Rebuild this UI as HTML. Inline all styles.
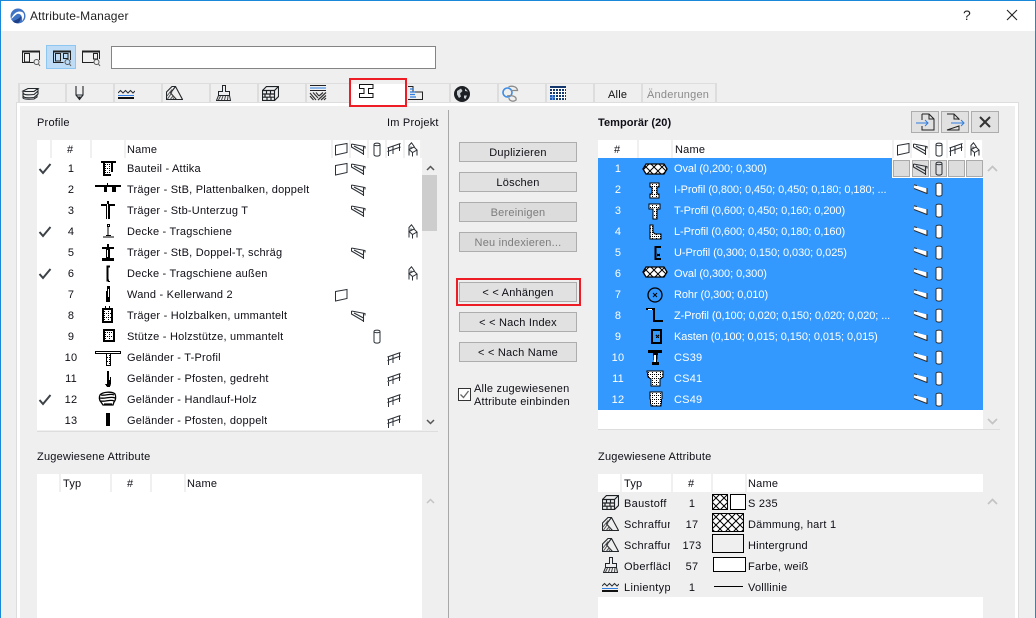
<!DOCTYPE html>
<html lang="de"><head><meta charset="utf-8"><title>Attribute-Manager</title>
<style>
html,body{margin:0;padding:0}
body{width:1036px;height:618px;overflow:hidden;position:relative;background:#efefef;font:11px/14px "Liberation Sans",sans-serif;color:#0e0e16;letter-spacing:.22px}
div,span,svg{position:absolute;box-sizing:border-box}
svg{overflow:visible}
.t{white-space:nowrap;margin-top:1px}
.btn{left:459px;width:118px;height:20px;background:#e1e1e1;border:1px solid #adadad;text-align:center;line-height:20px}
.dis{color:#7c7c7c;background:#dcdcdc}
.r{height:21px;line-height:23px;white-space:nowrap}
.n{width:30px;text-align:center}
.w{color:#fff}
.p{letter-spacing:-.07px}
.c{width:46px;overflow:hidden;letter-spacing:.32px}
.v{width:2px;background:#f0f0f0;top:0;height:18px}
.tab{top:83px;height:20px;border-top:1px solid #ddd;border-left:2px solid #ddd}
.cell{top:160px;width:17px;height:17px;background:#ddd;border:1px solid #aaa}
</style></head>
<body>
<svg width="0" height="0" style="left:0;top:0"><defs>
<pattern id="d" width="4" height="4" patternUnits="userSpaceOnUse"><rect width="4" height="4" fill="#fff"/><path d="M0 0h1v1H0zM2 2h1v1H2zM2 0h1v1H2z" fill="#000"/></pattern>
<pattern id="x" width="8" height="8" patternUnits="userSpaceOnUse"><rect width="8" height="8" fill="#fff"/><path d="M0 0L8 8M8 0L0 8" stroke="#000" stroke-width="1"/></pattern>
<symbol id="wall" viewBox="0 0 14 14"><path d="M1.500 3.500L13 1.500V10.500L1.500 13Z" fill="none" stroke="#2b3036" stroke-width="1"/></symbol>
<symbol id="beam" viewBox="0 0 15 14"><path d="M.5 2L14 4.500V6.500M.5 2V5L12.500 12V13M12.500 4.300V13M3 4L12.500 9" fill="none" stroke="#2b3036" stroke-width="1.050"/></symbol>
<symbol id="beamw" viewBox="0 0 15 14"><path d="M1 4L14 7.500V12.500L1 7.500Z" fill="#fff"/><path d="M1 7.500L14 12.500M14 7V13M1 3.800L4 4.500" fill="none" stroke="#2b3036" stroke-width="1.100"/></symbol>
<symbol id="col" viewBox="0 0 8 15"><path d="M1 2.500C1 .6 7 .6 7 2.500V12.500C7 14.600 1 14.600 1 12.500ZM1 3C2.500 4 5.500 4 7 3" fill="none" stroke="#2b3036" stroke-width="1"/></symbol>
<symbol id="colw" viewBox="0 0 8 15"><path d="M1 2.500C1 .6 7 .6 7 2.500V12.500C7 14.600 1 14.600 1 12.500Z" fill="#fff" stroke="#2b3036" stroke-width="1"/></symbol>
<symbol id="rail" viewBox="0 0 14 14"><path d="M.5 6L13.500 1.500M.5 9.500L13.500 5M1.500 14V5.500M6 12V4M12.500 9V2" fill="none" stroke="#2b3036" stroke-width="1"/></symbol>
<symbol id="chair" viewBox="0 0 10 15"><path d="M1 7.500V3.500L3.500 .8L5.500 3.500L6.500 5M1 7.500L6 5L9 8L4.500 10.500ZM1 7.500V13.500M4.500 10.500V14.500M9 8V13.500M3 4.500V6.500" fill="none" stroke="#2b3036" stroke-width="1"/></symbol>
<symbol id="brick" viewBox="0 0 17 15"><path d="M.5 4.500H12.500V14.500H.5ZM.5 4.500L4.500 .5H16.500V10.500L12.500 14.500M12.500 4.500L16.500 .5M.5 8H12.500M.5 11.200H12.500M4.500 4.500V8M8.500 4.500V8M3 8V11.200M8 8V11.200M5 11.200V14.500M9 11.200V14.500" fill="none" stroke="#1d2226" stroke-width="1.150"/></symbol>
<symbol id="hat" viewBox="0 0 17 14"><path d="M.5 6L6 .5H9.500L16.500 13.500H.5Z" fill="none" stroke="#22272b" stroke-width="1.100"/><path d="M9.500 .5L4.500 7L10.500 13.500" fill="none" stroke="#22272b" stroke-width="1.100"/><path d="M1 10L6 3.500M1.500 13L6 6.500M4.500 13L7.500 9.500M7 13L8.500 11" stroke="#555" stroke-width="1"/></symbol>
<symbol id="brush" viewBox="0 0 17 17"><path d="M6.500 .5H9.500V6.500H13.500V10.500L14.500 15.500H.5L2.500 10.500V6.500H6.500ZM2.500 10.500H13.500" fill="none" stroke="#22272b" stroke-width="1"/><path d="M2.500 15L4.500 11M5.500 15L7 11M8.500 15L9.500 11M11.500 15L12 11" stroke="#444" stroke-width="1"/></symbol>
<symbol id="lines" viewBox="0 0 17 10"><path d="M0 4L2.500 1.500L5 4L7.500 1.500L10 4L12.500 1.500L15 4L17 2" fill="none" stroke="#2b3036" stroke-width="1"/><path d="M0 6.500H16" stroke="#2f7de0" stroke-width="1"/><path d="M0 9H16" stroke="#111" stroke-width="2"/></symbol>
</defs></svg>

<!-- window frame and title -->
<div style="left:0;top:0;width:1036px;height:31px;background:#fff;border-top:1px solid #1a88d8"></div>
<div style="left:0;top:0;width:1px;height:618px;background:#1a88d8"></div>
<div style="right:0;top:0;width:1px;height:618px;background:#1a88d8"></div>
<svg style="left:10px;top:8px" width="16" height="16" viewBox="0 0 16 16"><circle cx="8" cy="8" r="7.500" fill="#3f73c4"/><path d="M1 11C4 4 9 2 13 4.500C15 7 14 11 12 13C13 8 10 5 7 6C5 7 3 10 1 11Z" fill="#fff"/><path d="M3 13C6 12 9 11 11 8C11 11 10 14 8 15C6 15.500 4 15 3 13Z" fill="#1d3f87"/></svg>
<div class="t" style="left:30px;top:7px;font-size:12px;line-height:16px;color:#222;letter-spacing:.15px">Attribute-Manager</div>
<div class="t" style="left:963px;top:6px;font-size:14px;line-height:16px;color:#222;letter-spacing:0">?</div>
<svg style="left:1006px;top:9px" width="12" height="12" viewBox="0 0 12 12"><path d="M1 1L11 11M11 1L1 11" stroke="#222" stroke-width="1.100"/></svg>

<!-- toolbar -->
<svg style="left:22px;top:50px" width="18" height="17" viewBox="0 0 18 17"><path d="M0 1.500H18" stroke="#222" stroke-width="2"/><path d="M.5 1V12.500H11.500M17.500 1V10M2.500 3.500H7.500V12H2.500Z" fill="none" stroke="#222" stroke-width="1"/><circle cx="14.500" cy="12" r="2.500" fill="#efefef" stroke="#555"/><path d="M16.500 14L18 16" stroke="#555"/></svg>
<div style="left:46px;top:45px;width:30px;height:24px;background:#bedcf6;border:1px solid #8ec6f2"></div>
<svg style="left:53px;top:50px" width="18" height="17" viewBox="0 0 18 17"><path d="M0 1.500H18" stroke="#222" stroke-width="2"/><path d="M.5 1V12.500H10.500M17.500 1V10M2.500 3.500H7.500V11H2.500ZM10.500 3.500H15V8.500H10.500Z" fill="none" stroke="#222" stroke-width="1"/><circle cx="14.500" cy="12" r="2.500" fill="#bedcf6" stroke="#555"/><path d="M16.500 14L18 16" stroke="#555"/></svg>
<svg style="left:82px;top:50px" width="18" height="17" viewBox="0 0 18 17"><path d="M0 1.500H18" stroke="#222" stroke-width="2"/><path d="M.5 1V12.500H11.500M17.500 1V9M11.500 3.500H15.500V9H11.500Z" fill="none" stroke="#222" stroke-width="1"/><circle cx="14.500" cy="12" r="2.500" fill="#efefef" stroke="#555"/><path d="M16.500 14L18 16" stroke="#555"/></svg>
<div style="left:111px;top:46px;width:325px;height:23px;background:#fff;border:1px solid #848484"></div>

<!-- tabs -->
<div class="tab" style="left:18px;width:47px"></div>
<div class="tab" style="left:65px;width:48px"></div>
<div class="tab" style="left:113px;width:48px"></div>
<div class="tab" style="left:161px;width:48px"></div>
<div class="tab" style="left:209px;width:48px"></div>
<div class="tab" style="left:257px;width:48px"></div>
<div class="tab" style="left:305px;width:46px"></div>
<div class="tab" style="left:405px;width:44px"></div>
<div class="tab" style="left:449px;width:48px"></div>
<div class="tab" style="left:497px;width:48px"></div>
<div class="tab" style="left:545px;width:48px"></div>
<div class="tab" style="left:593px;width:48px"></div>
<div class="tab" style="left:641px;width:76px;border-right:2px solid #ddd"></div>

<!-- panel -->
<div style="left:17px;top:103px;width:1001px;height:515px;background:#efefef;border:3px solid #fff;border-bottom:0;outline:1px solid #ddd;outline-offset:0"></div>
<div style="left:351px;top:84px;width:54px;height:23px;background:#fff"></div>
<div style="left:349px;top:78px;width:58px;height:29px;border:2px solid #ee1c25"></div>

<svg style="left:22px;top:87px" width="17" height="13" viewBox="0 0 17 13"><path d="M1 4L6 1.500H16L12 4.500H3ZM1 4V6C2 8 5 8 12 7.500L16 4V2M1 6.500V9C2 11 5 11 12 10.500L16 7V4.500M1 9.500V11C2 12.500 6 12.500 12 12L15 10V7.500" fill="none" stroke="#22272b" stroke-width="1.100"/></svg>
<svg style="left:75px;top:86px" width="9" height="15" viewBox="0 0 9 15"><path d="M1 0V9L4.500 13.500L8 9V0M1 9H8" fill="none" stroke="#22272b" stroke-width="1.100"/><path d="M3 10.500H6L4.500 13Z" fill="#222"/></svg>
<svg style="left:118px;top:89px" width="17" height="10"><use href="#lines"/></svg>
<svg style="left:166px;top:86px" width="17" height="14"><use href="#hat"/></svg>
<svg style="left:216px;top:85px" width="17" height="17"><use href="#brush"/></svg>
<svg style="left:262px;top:86px" width="17" height="15"><use href="#brick"/></svg>
<svg style="left:310px;top:85px" width="16" height="16" viewBox="0 0 16 16"><path d="M0 .5H16" stroke="#222"/><path d="M0 3H16" stroke="#2f7de0"/><path d="M0 5.500H16" stroke="#222"/><path d="M0 8L6 15M0 11L3.500 15M3 7.500L8 13M6 7.500L9 11M8 15L16 7.500M11 15L16 10.500M9 11L13 7.500M14 15L16 13" fill="none" stroke="#333" stroke-width="1.200"/></svg>
<svg style="left:359px;top:84px" width="15" height="15" viewBox="0 0 15 15"><path d="M.5 .5H14V4.500H9.500V9.500H14V13.500H.5V9.500H5V4.500H.5Z" fill="#fff" stroke="#111" stroke-width="1"/></svg>
<svg style="left:407px;top:86px" width="16" height="14" viewBox="0 0 16 14"><path d="M1 .5H6V6H15.500V13.500H1" fill="none" stroke="#222"/><path d="M3 3H6M3 6H8M3 8.500H8M3 11H9" stroke="#2f7de0" stroke-width="1.200"/></svg>
<svg style="left:454px;top:86px" width="16" height="16" viewBox="0 0 16 16"><circle cx="8" cy="8" r="8" fill="#1c2024"/><path d="M3 5L7 2.500L8.500 5L6 7.500L7 10.500L5 12L3 8.500ZM10 9.500H13L11.500 13L10 12ZM11 2.500L14 5.500L11 5Z" fill="#c8cdd1"/></svg>
<svg style="left:502px;top:85px" width="16" height="17" viewBox="0 0 16 17"><circle cx="5.500" cy="7.500" r="4.500" fill="none" stroke="#3d8ce6" stroke-width="1.600"/><path d="M6.500 2C9 .5 15 1 15.500 5.500H9M5 11C9 10 15 11 14 15C11 17.500 7 15.500 7 13" fill="none" stroke="#8c8c8c" stroke-width="1.300"/></svg>
<svg style="left:550px;top:86px" width="16" height="14" viewBox="0 0 16 14"><rect width="16" height="14" fill="#14386e"/><path d="M0 2.500H16M0 5.500H16M0 8.500H16M0 11.500H16M2.500 2V14M5.500 2V14M8.500 2V14M11.500 2V14M14.500 2V14" stroke="#fff" stroke-width="1"/><rect y="9" width="5" height="5" fill="#1f6ad6" opacity=".7"/></svg>
<div class="t" style="left:608px;top:87px;color:#111">Alle</div>
<div class="t" style="left:647px;top:87px;color:#8a8a8a">Änderungen</div>

<!-- divider -->
<div style="left:448px;top:110px;width:1px;height:508px;background:#a8a8a8"></div>

<!-- left top list -->
<div class="t" style="left:37px;top:115px">Profile</div>
<div class="t" style="left:387px;top:115px">Im Projekt</div>
<div style="left:37px;top:140px;width:385px;height:290px;background:#fff"></div>
<div class="v" style="left:50px;top:140px"></div><div class="v" style="left:90px;top:140px"></div><div class="v" style="left:124px;top:140px"></div><div class="v" style="left:331px;top:140px"></div><div class="v" style="left:349px;top:140px"></div><div class="v" style="left:367px;top:140px"></div><div class="v" style="left:385px;top:140px"></div><div class="v" style="left:403px;top:140px"></div><div class="v" style="left:420px;top:140px"></div>
<div class="t" style="left:67px;top:142px">#</div>
<div class="t" style="left:127px;top:142px">Name</div>
<svg style="left:334px;top:142px" width="14" height="14"><use href="#wall"/></svg>
<svg style="left:351px;top:142px" width="15" height="14"><use href="#beam"/></svg>
<svg style="left:373px;top:142px" width="8" height="15"><use href="#col"/></svg>
<svg style="left:387px;top:142px" width="14" height="14"><use href="#rail"/></svg>
<svg style="left:408px;top:142px" width="10" height="15"><use href="#chair"/></svg>

<div class="r n" style="left:56px;top:158px">1</div><div class="r" style="left:127px;top:158px">Bauteil - Attika</div>
<div class="r n" style="left:56px;top:179px">2</div><div class="r" style="left:127px;top:179px">Träger - StB, Plattenbalken, doppelt</div>
<div class="r n" style="left:56px;top:200px">3</div><div class="r" style="left:127px;top:200px">Träger - Stb-Unterzug T</div>
<div class="r n" style="left:56px;top:221px">4</div><div class="r" style="left:127px;top:221px">Decke - Tragschiene</div>
<div class="r n" style="left:56px;top:242px">5</div><div class="r" style="left:127px;top:242px">Träger - StB, Doppel-T, schräg</div>
<div class="r n" style="left:56px;top:263px">6</div><div class="r" style="left:127px;top:263px">Decke - Tragschiene außen</div>
<div class="r n" style="left:56px;top:284px">7</div><div class="r" style="left:127px;top:284px">Wand - Kellerwand 2</div>
<div class="r n" style="left:56px;top:305px">8</div><div class="r" style="left:127px;top:305px">Träger - Holzbalken, ummantelt</div>
<div class="r n" style="left:56px;top:326px">9</div><div class="r" style="left:127px;top:326px">Stütze - Holzstütze, ummantelt</div>
<div class="r n" style="left:56px;top:347px">10</div><div class="r" style="left:127px;top:347px">Geländer - T-Profil</div>
<div class="r n" style="left:56px;top:368px">11</div><div class="r" style="left:127px;top:368px">Geländer - Pfosten, gedreht</div>
<div class="r n" style="left:56px;top:389px">12</div><div class="r" style="left:127px;top:389px">Geländer - Handlauf-Holz</div>
<div class="r n" style="left:56px;top:410px;height:19px;overflow:hidden">13</div><div class="r" style="left:127px;top:410px;height:19px;overflow:hidden">Geländer - Pfosten, doppelt</div>

<!-- check marks -->
<svg style="left:38px;top:163px" width="14" height="12" viewBox="0 0 14 12"><path d="M1.500 6L5 10L12.500 1" fill="none" stroke="#3c4247" stroke-width="2"/></svg>
<svg style="left:38px;top:226px" width="14" height="12" viewBox="0 0 14 12"><path d="M1.500 6L5 10L12.500 1" fill="none" stroke="#3c4247" stroke-width="2"/></svg>
<svg style="left:38px;top:268px" width="14" height="12" viewBox="0 0 14 12"><path d="M1.500 6L5 10L12.500 1" fill="none" stroke="#3c4247" stroke-width="2"/></svg>
<svg style="left:38px;top:394px" width="14" height="12" viewBox="0 0 14 12"><path d="M1.500 6L5 10L12.500 1" fill="none" stroke="#3c4247" stroke-width="2"/></svg>

<!-- left profile icons -->
<svg style="left:95px;top:160px" width="26" height="17" viewBox="0 0 26 17" shape-rendering="crispEdges"><path d="M6 1H21V3H18V12H16V16H8V3H6Z" fill="#000"/><path d="M10 3H16V14H10Z" fill="url(#d)"/></svg>
<svg style="left:95px;top:183px" width="26" height="12" viewBox="0 0 26 12" shape-rendering="crispEdges"><path d="M0 2H26V4H21V9H17V4H12V9H9V4H0Z" fill="#000"/><path d="M12 0h1v2h-1z" fill="#000"/></svg>
<svg style="left:95px;top:201px" width="26" height="19" viewBox="0 0 26 19" shape-rendering="crispEdges"><path d="M6 3H20V5H15V18H11V5H6Z" fill="#000"/><path d="M12 1h1v17h-1z" fill="#fff"/><path d="M12 0h2v3h-2z" fill="#000"/></svg>
<svg style="left:95px;top:223px" width="26" height="18" viewBox="0 0 26 18" shape-rendering="crispEdges"><path d="M12.500 1.500H14.500V3.500H12.500ZM13 3V13M8 14H19" stroke="#000" fill="none"/><path d="M11 12h5v1h-5z" fill="#000"/></svg>
<svg style="left:95px;top:243px" width="26" height="20" viewBox="0 0 26 20" shape-rendering="crispEdges"><path d="M7 4H19V6H15V15H19V18H7V15H11V6H7Z" fill="#000"/><path d="M12 1h2v3h-2z" fill="#000"/><path d="M12 7h1v7h-1z" fill="#fff"/></svg>
<svg style="left:95px;top:265px" width="26" height="18" viewBox="0 0 26 18" shape-rendering="crispEdges"><path d="M15 1.500H12.500V15.500H14" fill="none" stroke="#000" stroke-width="2"/><path d="M13 16h2v1h-2z" fill="#000"/></svg>
<svg style="left:95px;top:285px" width="26" height="19" viewBox="0 0 26 19" shape-rendering="crispEdges"><path d="M12 1H15V17H11V6H12Z" fill="#000"/><path d="M13 4h1v8h-1z" fill="#fff"/></svg>
<svg style="left:94px;top:305px" width="26" height="20" viewBox="0 0 26 20" shape-rendering="crispEdges"><path d="M8 3H19V18H8Z" fill="#000"/><path d="M10 5H17V16H10Z" fill="url(#d)"/><path d="M11 1h1v3h-1zM15 1h1v3h-1z" fill="#000"/></svg>
<svg style="left:95px;top:328px" width="26" height="18" viewBox="0 0 26 18" shape-rendering="crispEdges"><path d="M8 1H20V14H8Z" fill="#000"/><path d="M10 3H18V12H10Z" fill="url(#d)"/></svg>
<svg style="left:95px;top:349px" width="26" height="18" viewBox="0 0 26 18" shape-rendering="crispEdges"><path d="M0 2H26V5H16V17H11V5H0Z" fill="#000"/><path d="M1 3h24v1H1zM12 5h3v11h-3z" fill="url(#d)"/></svg>
<svg style="left:95px;top:370px" width="26" height="19" viewBox="0 0 26 19" shape-rendering="crispEdges"><path d="M12 1H14V10H16V14L15 17H12L10 14H12Z" fill="#000"/><path d="M15 7h1v6h-1z" fill="#000"/></svg>
<svg style="left:98px;top:391px" width="20" height="17" viewBox="0 0 20 17"><path d="M2 4C4 1 14 0 17 3C18 5 18 9 16 11L15 14H5L3 11C1 9 1 6 2 4Z" fill="#fff" stroke="#000" stroke-width="1.300"/><path d="M3 4C7 5 13 2 16 4M2 7C7 8 13 5 17 7M3 10C7 11 13 8 16 10M6 13H14" fill="none" stroke="#000" stroke-width="1.300"/></svg>
<svg style="left:95px;top:412px" width="26" height="17" viewBox="0 0 26 17" shape-rendering="crispEdges"><path d="M11 1H15V14H11Z" fill="#000"/></svg>

<!-- left row attribute icons -->
<svg style="left:334px;top:162px" width="14" height="14"><use href="#wall"/></svg><svg style="left:351px;top:162px" width="15" height="14"><use href="#beam"/></svg>
<svg style="left:351px;top:183px" width="15" height="14"><use href="#beam"/></svg>
<svg style="left:351px;top:204px" width="15" height="14"><use href="#beam"/></svg>
<svg style="left:408px;top:224px" width="10" height="15"><use href="#chair"/></svg>
<svg style="left:351px;top:246px" width="15" height="14"><use href="#beam"/></svg>
<svg style="left:408px;top:266px" width="10" height="15"><use href="#chair"/></svg>
<svg style="left:334px;top:288px" width="14" height="14"><use href="#wall"/></svg>
<svg style="left:351px;top:309px" width="15" height="14"><use href="#beam"/></svg>
<svg style="left:373px;top:329px" width="8" height="15"><use href="#col"/></svg>
<svg style="left:387px;top:351px" width="14" height="14"><use href="#rail"/></svg>
<svg style="left:387px;top:372px" width="14" height="14"><use href="#rail"/></svg>
<svg style="left:387px;top:393px" width="14" height="14"><use href="#rail"/></svg>
<svg style="left:387px;top:414px" width="14" height="14"><use href="#rail"/></svg>

<!-- left scrollbar -->
<div style="left:422px;top:175px;width:15px;height:56px;background:#cdcdcd"></div>
<svg style="left:426px;top:165px" width="9" height="6" viewBox="0 0 9 6"><path d="M1 5L4.500 1.500L8 5" fill="none" stroke="#555" stroke-width="1.500"/></svg>
<svg style="left:426px;top:419px" width="9" height="6" viewBox="0 0 9 6"><path d="M1 1L4.500 4.500L8 1" fill="none" stroke="#555" stroke-width="1.500"/></svg>
<div style="left:37px;top:431px;width:401px;height:1px;background:#ddd"></div>

<!-- left lower list -->
<div class="t" style="left:37px;top:449px">Zugewiesene Attribute</div>
<div style="left:37px;top:474px;width:385px;height:144px;background:#fff"></div>
<div class="v" style="left:59px;top:474px"></div><div class="v" style="left:110px;top:474px"></div><div class="v" style="left:150px;top:474px"></div><div class="v" style="left:184px;top:474px"></div>
<div class="t" style="left:63px;top:476px">Typ</div>
<div class="t" style="left:127px;top:476px">#</div>
<div class="t" style="left:187px;top:476px">Name</div>
<svg style="left:426px;top:498px" width="9" height="6" viewBox="0 0 9 6"><path d="M1 5L4.500 1.500L8 5" fill="none" stroke="#c4c4c4" stroke-width="1.500"/></svg>

<!-- middle buttons -->
<div class="btn" style="top:142px">Duplizieren</div>
<div class="btn" style="top:172px">Löschen</div>
<div class="btn dis" style="top:202px">Bereinigen</div>
<div class="btn dis" style="top:232px">Neu indexieren...</div>
<div style="left:456px;top:278px;width:125px;height:28px;border:2px solid #ee1c25"></div>
<div class="btn" style="top:282px">&lt; &lt; Anhängen</div>
<div class="btn" style="top:312px">&lt; &lt; Nach Index</div>
<div class="btn" style="top:342px">&lt; &lt; Nach Name</div>
<div style="left:458px;top:388px;width:13px;height:13px;background:#fff;border:1px solid #333"></div>
<svg style="left:459px;top:389px" width="11" height="11" viewBox="0 0 11 11"><path d="M1.500 5.500L4.500 8.500L9.500 2" fill="none" stroke="#666" stroke-width="1.300"/></svg>
<div class="t" style="left:474px;top:382px;line-height:13px">Alle zugewiesenen<br>Attribute einbinden</div>

<!-- right header -->
<div class="t" style="left:598px;top:115px;font-weight:bold;letter-spacing:.05px">Temporär (20)</div>
<div style="left:911px;top:111px;width:28px;height:22px;background:#e1e1e1;border:1px solid #adadad"></div>
<div style="left:941px;top:111px;width:28px;height:22px;background:#e1e1e1;border:1px solid #adadad"></div>
<div style="left:971px;top:111px;width:28px;height:22px;background:#e1e1e1;border:1px solid #adadad"></div>
<svg style="left:916px;top:113px" width="19" height="18" viewBox="0 0 19 18"><path d="M6 1H13L18 6V17H6V13M6 7V1M13 1V6H18" fill="none" stroke="#222" stroke-width="1"/><path d="M0 10H12M9 7L12 10L9 13" fill="none" stroke="#2f7de0" stroke-width="1"/></svg>
<svg style="left:946px;top:113px" width="19" height="18" viewBox="0 0 19 18"><path d="M1 1H8L13 6V7M13 13V17H1ZM8 1V6H13" fill="none" stroke="#222" stroke-width="1"/><path d="M5 10H18M15 7L18 10L15 13" fill="none" stroke="#2f7de0" stroke-width="1"/></svg>
<svg style="left:979px;top:116px" width="12" height="12" viewBox="0 0 12 12"><path d="M1 1L11 11M11 1L1 11" stroke="#333" stroke-width="2"/></svg>

<!-- right top list -->
<div style="left:598px;top:140px;width:385px;height:289px;background:#fff"></div>
<div style="left:598px;top:158px;width:385px;height:252px;background:#3399ff"></div>
<div class="v" style="left:637px;top:140px"></div><div class="v" style="left:671px;top:140px"></div><div class="v" style="left:892px;top:140px"></div><div class="v" style="left:910px;top:140px"></div><div class="v" style="left:928px;top:140px"></div><div class="v" style="left:946px;top:140px"></div><div class="v" style="left:964px;top:140px"></div><div class="v" style="left:982px;top:140px"></div>
<div class="t" style="left:614px;top:142px">#</div>
<div class="t" style="left:675px;top:142px">Name</div>
<svg style="left:896px;top:142px" width="14" height="14"><use href="#wall"/></svg>
<svg style="left:913px;top:142px" width="15" height="14"><use href="#beam"/></svg>
<svg style="left:935px;top:142px" width="8" height="15"><use href="#col"/></svg>
<svg style="left:949px;top:142px" width="14" height="14"><use href="#rail"/></svg>
<svg style="left:970px;top:142px" width="10" height="15"><use href="#chair"/></svg>

<div class="r n w" style="left:603px;top:158px">1</div><div class="r w p" style="left:674px;top:158px">Oval (0,200; 0,300)</div>
<div class="r n w" style="left:603px;top:179px">2</div><div class="r w p" style="left:674px;top:179px">I-Profil (0,800; 0,450; 0,450; 0,180; 0,180; ...</div>
<div class="r n w" style="left:603px;top:200px">3</div><div class="r w p" style="left:674px;top:200px">T-Profil (0,600; 0,450; 0,160; 0,200)</div>
<div class="r n w" style="left:603px;top:221px">4</div><div class="r w p" style="left:674px;top:221px">L-Profil (0,600; 0,450; 0,180; 0,160)</div>
<div class="r n w" style="left:603px;top:242px">5</div><div class="r w p" style="left:674px;top:242px">U-Profil (0,300; 0,150; 0,030; 0,025)</div>
<div class="r n w" style="left:603px;top:263px">6</div><div class="r w p" style="left:674px;top:263px">Oval (0,300; 0,300)</div>
<div class="r n w" style="left:603px;top:284px">7</div><div class="r w p" style="left:674px;top:284px">Rohr (0,300; 0,010)</div>
<div class="r n w" style="left:603px;top:305px">8</div><div class="r w p" style="left:674px;top:305px">Z-Profil (0,100; 0,020; 0,150; 0,020; 0,020; ...</div>
<div class="r n w" style="left:603px;top:326px">9</div><div class="r w p" style="left:674px;top:326px">Kasten (0,100; 0,015; 0,150; 0,015; 0,015)</div>
<div class="r n w" style="left:603px;top:347px">10</div><div class="r w" style="left:674px;top:347px">CS39</div>
<div class="r n w" style="left:603px;top:368px">11</div><div class="r w" style="left:674px;top:368px">CS41</div>
<div class="r n w" style="left:603px;top:389px">12</div><div class="r w" style="left:674px;top:389px">CS49</div>

<!-- right profile icons -->
<svg style="left:642px;top:163px" width="26" height="12" viewBox="0 0 26 12"><path d="M4 1H22L25 6L22 11H4L1 6Z" fill="url(#x)" stroke="#000" stroke-width="1.300"/></svg>
<svg style="left:642px;top:182px" width="26" height="17" viewBox="0 0 26 17" shape-rendering="crispEdges"><path d="M8 1H17V5H15V12H17V16H8V12H10V5H8Z" fill="url(#d)" stroke="#000" stroke-width="1"/></svg>
<svg style="left:642px;top:203px" width="26" height="17" viewBox="0 0 26 17" shape-rendering="crispEdges"><path d="M7 1H18V6H15V16H11V6H7Z" fill="url(#d)" stroke="#000"/></svg>
<svg style="left:642px;top:224px" width="26" height="16" viewBox="0 0 26 16" shape-rendering="crispEdges"><path d="M8 1H11V8L13 10H19V15H8Z" fill="url(#d)" stroke="#000"/></svg>
<svg style="left:642px;top:245px" width="26" height="16" viewBox="0 0 26 16" shape-rendering="crispEdges"><path d="M19 2H13.500V14H19" fill="none" stroke="#000" stroke-width="2"/><path d="M15 9L18 11M18 9L15 11" stroke="#000"/></svg>
<svg style="left:642px;top:266px" width="26" height="12" viewBox="0 0 26 12"><path d="M4 1H22L25 6L22 11H4L1 6Z" fill="url(#x)" stroke="#000" stroke-width="1.300"/></svg>
<svg style="left:646px;top:286px" width="18" height="18" viewBox="0 0 18 18"><circle cx="9" cy="9" r="7" fill="none" stroke="#000" stroke-width="1.300"/><path d="M7 7L11 11M11 7L7 11" stroke="#000"/></svg>
<svg style="left:642px;top:307px" width="26" height="17" viewBox="0 0 26 17" shape-rendering="crispEdges"><path d="M4 2H12V14H21" fill="none" stroke="#000" stroke-width="2"/><path d="M6 2h4v1H6z" fill="#fff"/></svg>
<svg style="left:642px;top:328px" width="26" height="17" viewBox="0 0 26 17" shape-rendering="crispEdges"><path d="M9 1H20V16H9Z" fill="#000"/><path d="M11 3H18V14H11Z" fill="#3399ff"/><path d="M14 7L17 10M17 7L14 10" stroke="#000"/></svg>
<svg style="left:642px;top:349px" width="26" height="17" viewBox="0 0 26 17" shape-rendering="crispEdges"><path d="M6 1H20V4H16L15 13H17V16H10V13H12L11 4H6Z" fill="#000"/><path d="M12 6h2v7h-2z" fill="#fff"/></svg>
<svg style="left:642px;top:370px" width="26" height="17" viewBox="0 0 26 17" shape-rendering="crispEdges"><path d="M5 1H21V7L18 9V16H9V9L6 7Z" fill="url(#d)" stroke="#000"/></svg>
<svg style="left:642px;top:391px" width="26" height="17" viewBox="0 0 26 17" shape-rendering="crispEdges"><path d="M8 1H20V6L19 15H9L8 6Z" fill="url(#d)" stroke="#000"/></svg>

<!-- right row 1 cells -->
<div style="left:892px;top:158px;width:91px;height:20px;background:#fff"></div>
<div class="cell" style="left:893px"></div><div class="cell" style="left:912px"></div><div class="cell" style="left:930px"></div><div class="cell" style="left:948px"></div><div class="cell" style="left:966px"></div>
<svg style="left:913px;top:162px" width="15" height="14"><use href="#beam"/></svg>
<svg style="left:935px;top:161px" width="8" height="15"><use href="#col"/></svg>
<svg style="left:913px;top:181px" width="15" height="14"><use href="#beamw"/></svg><svg style="left:935px;top:182px" width="8" height="15"><use href="#colw"/></svg>
<svg style="left:913px;top:202px" width="15" height="14"><use href="#beamw"/></svg><svg style="left:935px;top:203px" width="8" height="15"><use href="#colw"/></svg>
<svg style="left:913px;top:223px" width="15" height="14"><use href="#beamw"/></svg><svg style="left:935px;top:224px" width="8" height="15"><use href="#colw"/></svg>
<svg style="left:913px;top:244px" width="15" height="14"><use href="#beamw"/></svg><svg style="left:935px;top:245px" width="8" height="15"><use href="#colw"/></svg>
<svg style="left:913px;top:265px" width="15" height="14"><use href="#beamw"/></svg><svg style="left:935px;top:266px" width="8" height="15"><use href="#colw"/></svg>
<svg style="left:913px;top:286px" width="15" height="14"><use href="#beamw"/></svg><svg style="left:935px;top:287px" width="8" height="15"><use href="#colw"/></svg>
<svg style="left:913px;top:307px" width="15" height="14"><use href="#beamw"/></svg><svg style="left:935px;top:308px" width="8" height="15"><use href="#colw"/></svg>
<svg style="left:913px;top:328px" width="15" height="14"><use href="#beamw"/></svg><svg style="left:935px;top:329px" width="8" height="15"><use href="#colw"/></svg>
<svg style="left:913px;top:349px" width="15" height="14"><use href="#beamw"/></svg><svg style="left:935px;top:350px" width="8" height="15"><use href="#colw"/></svg>
<svg style="left:913px;top:370px" width="15" height="14"><use href="#beamw"/></svg><svg style="left:935px;top:371px" width="8" height="15"><use href="#colw"/></svg>
<svg style="left:913px;top:391px" width="15" height="14"><use href="#beamw"/></svg><svg style="left:935px;top:392px" width="8" height="15"><use href="#colw"/></svg>

<svg style="left:987px;top:165px" width="11" height="7" viewBox="0 0 11 7"><path d="M1 6L5.500 1.500L10 6" fill="none" stroke="#c4c4c4" stroke-width="1.800"/></svg>
<svg style="left:987px;top:418px" width="11" height="7" viewBox="0 0 11 7"><path d="M1 1L5.500 5.500L10 1" fill="none" stroke="#c4c4c4" stroke-width="1.800"/></svg>
<div style="left:598px;top:429px;width:402px;height:1px;background:#ddd"></div>

<!-- right lower list -->
<div class="t" style="left:598px;top:449px">Zugewiesene Attribute</div>
<div style="left:598px;top:474px;width:385px;height:144px;background:#fff"></div>
<div style="left:598px;top:492px;width:385px;height:105px;background:#efefef"></div>
<div class="v" style="left:620px;top:474px"></div><div class="v" style="left:671px;top:474px"></div><div class="v" style="left:711px;top:474px"></div><div class="v" style="left:745px;top:474px"></div>
<div class="t" style="left:624px;top:476px">Typ</div>
<div class="t" style="left:688px;top:476px">#</div>
<div class="t" style="left:748px;top:476px">Name</div>

<svg style="left:602px;top:495px" width="17" height="15"><use href="#brick"/></svg>
<svg style="left:602px;top:517px" width="17" height="14"><use href="#hat"/></svg>
<svg style="left:602px;top:538px" width="17" height="14"><use href="#hat"/></svg>
<svg style="left:603px;top:557px" width="17" height="17"><use href="#brush"/></svg>
<svg style="left:602px;top:582px" width="17" height="10"><use href="#lines"/></svg>

<div class="r c" style="left:624px;top:493px">Baustoff</div><div class="r n" style="left:677px;top:493px">1</div><div class="r" style="left:748px;top:493px">S 235</div>
<div class="r c" style="left:624px;top:514px">Schraffur</div><div class="r n" style="left:677px;top:514px">17</div><div class="r" style="left:748px;top:514px">Dämmung, hart 1</div>
<div class="r c" style="left:624px;top:535px">Schraffur</div><div class="r n" style="left:677px;top:535px">173</div><div class="r" style="left:748px;top:535px">Hintergrund</div>
<div class="r c" style="left:624px;top:556px">Oberfläche</div><div class="r n" style="left:677px;top:556px">57</div><div class="r" style="left:748px;top:556px">Farbe, weiß</div>
<div class="r c" style="left:624px;top:577px">Linientyp</div><div class="r n" style="left:677px;top:577px">1</div><div class="r" style="left:748px;top:577px">Volllinie</div>

<svg style="left:712px;top:494px" width="16" height="16"><rect x=".5" y=".5" width="15" height="15" fill="url(#x)" stroke="#000"/></svg>
<div style="left:730px;top:494px;width:16px;height:16px;background:#fff;border:1px solid #000"></div>
<svg style="left:712px;top:513px" width="32" height="19"><rect x=".5" y=".5" width="31" height="18" fill="url(#x)" stroke="#000"/></svg>
<div style="left:712px;top:534px;width:32px;height:19px;background:#efefef;border:1px solid #000"></div>
<div style="left:713px;top:557px;width:33px;height:15px;background:#fff;border:1px solid #000"></div>
<div style="left:714px;top:586px;width:29px;height:1px;background:#000"></div>

<svg style="left:987px;top:498px" width="11" height="7" viewBox="0 0 11 7"><path d="M1 6L5.500 1.500L10 6" fill="none" stroke="#c4c4c4" stroke-width="1.800"/></svg>
</body></html>
